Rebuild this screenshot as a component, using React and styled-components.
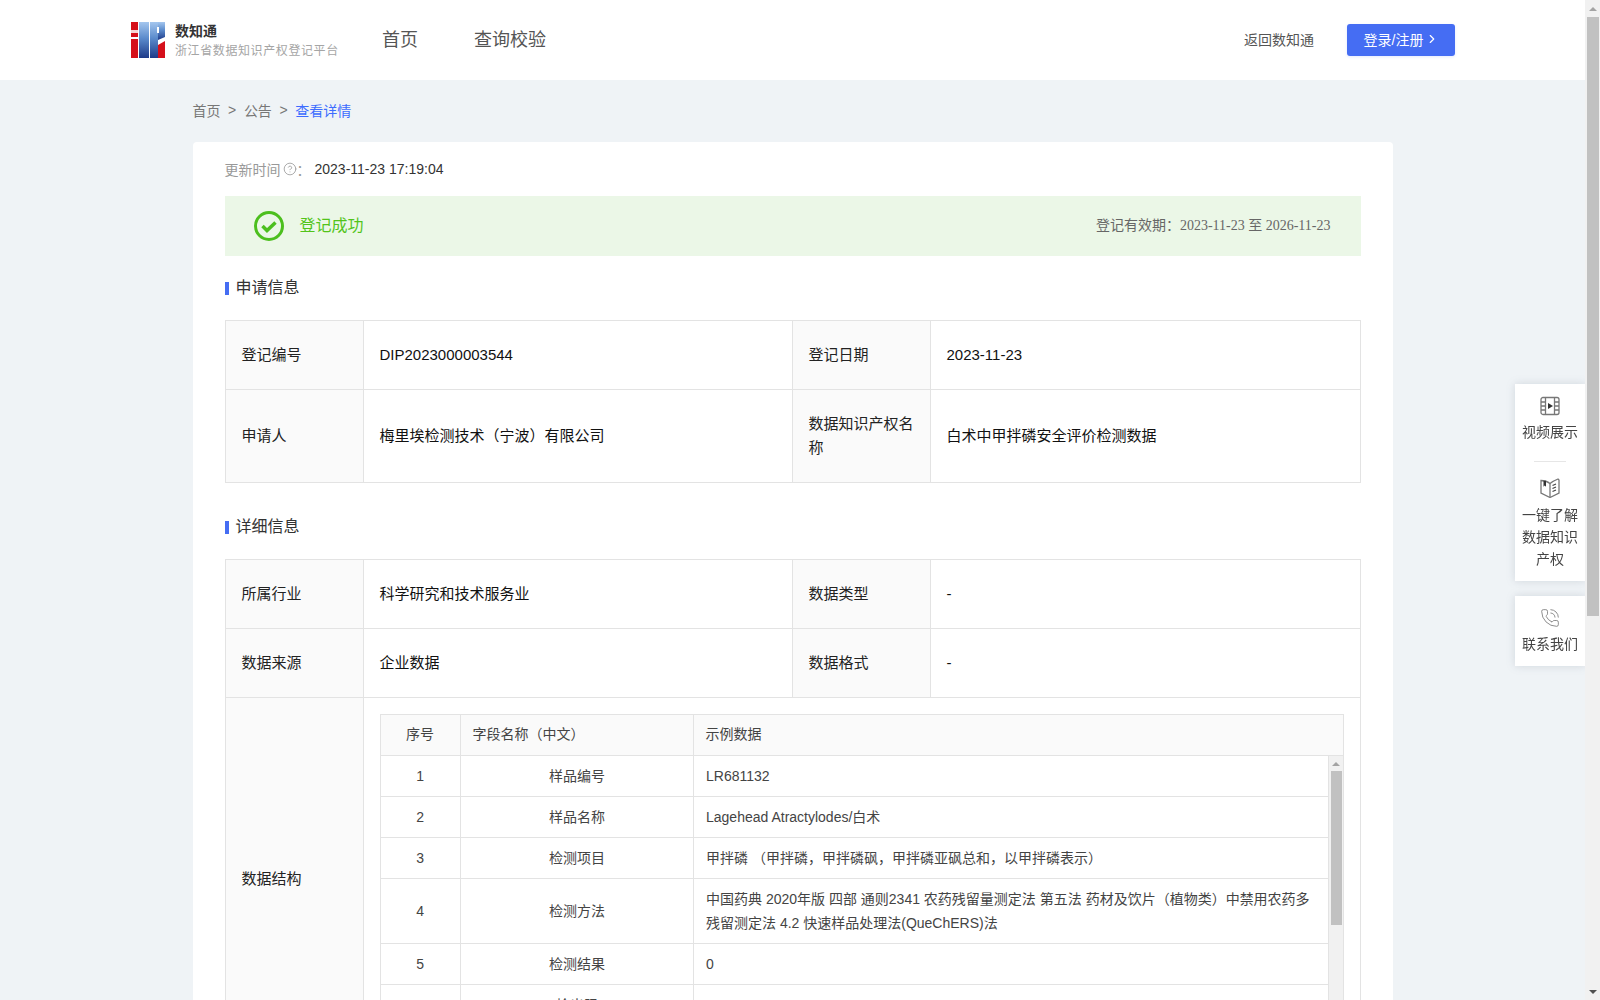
import React from 'react';
import styled, { createGlobalStyle } from 'styled-components';
import { ChevronRight, CircleHelp, PhoneCall } from 'lucide-react';

const sans = '"Liberation Sans", "Noto Sans CJK SC", sans-serif';
const line = '#e3e3e3';

const Global = createGlobalStyle`
  html { scrollbar-width: none; }
  body {
    margin: 0;
    width: 1585px;
    background: #eff3f6;
    font-family: ${sans};
    font-size: 14px;
    color: #333;
  }
`;

const Header = styled.header`
  height: 80px;
  background: #fff;
  display: flex;
  align-items: center;
  padding: 0 130px 0 131px;
`;

const Brand = styled.div`
  display: flex;
  align-items: center;
  gap: 10px;
  width: 251px;
`;

const BrandText = styled.div`
  display: flex;
  flex-direction: column;
  gap: 2px;
  padding-top: 2px;
  strong {
    font-size: 14px;
    line-height: 18px;
    color: #333;
  }
  span {
    font-size: 12px;
    line-height: 18px;
    color: #a5a5a5;
    letter-spacing: 0.6px;
    white-space: nowrap;
  }
`;

const Nav = styled.nav`
  display: flex;
  gap: 56px;
  flex: 1;
  padding-bottom: 4px;
  a {
    font-size: 18px;
    color: #555;
  }
`;

const BackLink = styled.a`
  color: #555;
  margin-right: 33px;
  padding-bottom: 3px;
`;

const LoginButton = styled.button`
  width: 108px;
  height: 32px;
  padding: 0 0 3px 1px;
  border: 0;
  border-radius: 3px;
  background: #456df3;
  color: #fff;
  font: 14px ${sans};
  display: flex;
  align-items: center;
  justify-content: center;
  gap: 2px;
  box-shadow: 0 1px 3px rgba(69, 109, 243, 0.15);
`;

const Main = styled.main`
  width: 1200px;
  margin: 0 auto 20px;
`;

const Crumbs = styled.div`
  height: 60px;
  margin-bottom: 2px;
  display: flex;
  align-items: center;
  gap: 7.6px;
  color: #777;
`;

const CrumbCurrent = styled.span`
  color: #3d6cff;
`;

const Card = styled.section`
  box-sizing: border-box;
  min-height: 1453px;
  padding: 0 32px;
  background: #fff;
  border-radius: 4px;
`;

const UpdateLine = styled.div`
  height: 54px;
  display: flex;
  align-items: center;
  color: #999;
  svg {
    margin: 0 0 0 2px;
  }
`;

const UpdateValue = styled.span`
  color: #333;
  margin-left: 4px;
`;

const Banner = styled.div`
  height: 60px;
  background: #ebf7e7;
  display: flex;
  align-items: center;
  padding: 0 30px 0 29px;
`;

const BannerTitle = styled.span`
  flex: 1;
  margin-left: 16px;
  padding-bottom: 5px;
  font-size: 16px;
  color: #52c41a;
`;

const Validity = styled.span`
  padding-bottom: 5px;
  color: #666;
`;

const Dates = styled.span`
  font-family: "Liberation Serif", "Noto Sans CJK SC", serif;
`;

const SectionTitle = styled.h3`
  height: 64px;
  margin: ${(props) => (props.$spaced ? '12px' : '0')} 0 0;
  display: flex;
  align-items: center;
  gap: 7px;
  font-size: 16px;
  font-weight: 400;
  color: #333;
  &::before {
    content: '';
    width: 4px;
    height: 13px;
    background: #456df3;
  }
  span {
    margin-top: -4px;
  }
`;

const InfoTable = styled.table`
  width: 1135px;
  table-layout: fixed;
  border-collapse: collapse;
  font-size: 15px;
  td, th {
    border: 1px solid ${line};
    padding: 0 16px;
    line-height: 24px;
    font-weight: 400;
    text-align: left;
  }
`;

const InfoRow = styled.tr`
  height: ${(props) => props.$height}px;
`;

const Label = styled.th`
  background: #fafafa;
  color: #222;
`;

const Value = styled.td`
  color: #111;
`;

const StructCell = styled.td`
  && { padding: 16px; }
`;

const FieldHead = styled.table`
  width: 100%;
  table-layout: fixed;
  border-collapse: collapse;
  font-size: 14px;
  && th {
    height: 38px;
    padding: 0 12px 2px;
    border: 1px solid ${line};
    background: #fafafa;
    color: #444;
  }
  && th:first-child { text-align: center; }
`;

const FieldBody = styled.div`
  height: 288px;
  display: flex;
  box-sizing: border-box;
  border: 1px solid ${line};
  border-top: 0;
`;

const FieldScroll = styled.div`
  flex: 1;
  min-width: 0;
  overflow-y: auto;
  scrollbar-width: none;
`;

const FieldRows = styled.table`
  width: 100%;
  table-layout: fixed;
  border-collapse: collapse;
  font-size: 14px;
  && td {
    padding: 8px 12px;
    border: 0;
    border-right: 1px solid ${line};
    border-bottom: 1px solid ${line};
    color: #444;
    line-height: 24px;
    height: 24px;
  }
  && td:nth-child(-n + 2) { text-align: center; }
`;

const Rail = styled.div`
  display: flex;
  flex-direction: column;
  flex: none;
  box-sizing: border-box;
  width: 14px;
  background: #f1f1f1;
`;

const PageRail = styled(Rail)`
  position: fixed;
  top: 0;
  right: 0;
  width: 15px;
  height: 100vh;
`;

const RailButton = styled.div`
  flex: none;
  height: ${(props) => props.$size}px;
  display: flex;
  align-items: center;
  justify-content: center;
  margin-top: ${(props) => (props.$down ? 'auto' : '0')};
  &::before {
    content: '';
    border-left: 4px solid transparent;
    border-right: 4px solid transparent;
    border-${(props) => (props.$down ? 'top' : 'bottom')}: 4px solid ${(props) => (props.$down ? '#505050' : '#a3a3a3')};
  }
`;

const RailThumb = styled.div`
  flex: none;
  height: ${(props) => props.$height}px;
  margin-left: 2px;
  margin-right: 1px;
  background: #c1c1c1;
`;

const Side = styled.aside`
  position: fixed;
  top: 384px;
  right: 15px;
  display: flex;
  flex-direction: column;
  gap: 15px;
`;

const SideCard = styled.div`
  width: 70px;
  background: #fff;
  box-shadow: 0 0 8px rgba(120, 130, 150, 0.25);
`;

const SideItem = styled.div`
  display: flex;
  flex-direction: column;
  align-items: center;
  padding: ${(props) => props.$pad};
  text-align: center;
  line-height: 22px;
  color: #444;
  svg { display: block; margin-bottom: ${(props) => props.$gap}px; color: #777; }
  span { width: 56px; }
`;

const SideRule = styled.div`
  width: 32px;
  height: 1px;
  margin: 0 auto;
  background: #e6e6e6;
`;

const ScrollBar = ({ as, thumb, button }) => {
  const Track = as || Rail;
  return (
    <Track>
      <RailButton $size={button} />
      <RailThumb $height={thumb} />
      <RailButton $size={button} $down />
    </Track>
  );
};

const LogoMark = () => (
  <svg width="34" height="36" viewBox="0 0 34 36">
    <defs>
      <linearGradient id="logoBlue" x1="0" y1="0" x2="0" y2="1">
        <stop offset="0" stopColor="#a4c6ee" />
        <stop offset="0.45" stopColor="#5b8bcc" />
        <stop offset="1" stopColor="#1e3a88" />
      </linearGradient>
    </defs>
    <rect x="0" y="0" width="7" height="8" fill="#d5101b" />
    <rect x="0" y="8" width="7" height="3" fill="#f5d5d5" />
    <rect x="0" y="11" width="7" height="4" fill="#d5101b" />
    <rect x="0" y="15" width="7" height="2" fill="#fff" />
    <rect x="0" y="17" width="7" height="19" fill="#d5101b" />
    <rect x="8" y="0" width="10" height="36" fill="url(#logoBlue)" />
    <rect x="19" y="0" width="8" height="36" fill="url(#logoBlue)" />
    <path d="M27 0h7v15l-7 3z" fill="url(#logoBlue)" />
    <rect x="26" y="5" width="2" height="6" fill="#fff" />
    <path d="M27 20.500L34 17V19L27 23z" fill="#fff" />
    <path d="M27 23l7-4v17h-7z" fill="#d5101b" />
  </svg>
);

const SuccessMark = () => (
  <svg width="30" height="30" viewBox="0 0 30 30">
    <circle cx="15" cy="15" r="13.500" fill="none" stroke="#4cbf1e" strokeWidth="3" />
    <path d="M8.500 15l4.500 4.500 8.500-8" fill="none" stroke="#4cbf1e" strokeWidth="3.500" />
  </svg>
);

const FilmIcon = () => (
  <svg width="20" height="20" viewBox="0 0 20 20" fill="none" stroke="currentColor" strokeWidth="1.3">
    <rect x="1" y="1.500" width="18" height="17" rx="2" />
    <path d="M5.500 1.500v17M14.500 1.500v17M1 6h4.500M1 10h4.500M1 14h4.500M14.500 6H19M14.500 10H19M14.500 14H19" />
    <path d="M8 7l5 3-5 3z" fill="#333" stroke="none" />
  </svg>
);

const BookIcon = () => (
  <svg width="20" height="20" viewBox="0 0 20 20" fill="none" stroke="currentColor" strokeWidth="1.3">
    <path d="M1 2.500c3 0 6.500 1 9 3 2.500-2 4-3 8-4.500l1 1v13l-9 4.500-9-4.500z" />
    <path d="M10 5.500V19" />
    <path d="M3.500 2.800h2.500v6L4.700 7.500 3.500 8.800z" fill="#333" stroke="none" />
    <path d="M12.500 7.500l3.500-1.500M12.500 10.500l3.500-1.500M12.500 13.500l3.500-1.500" stroke="#444" />
  </svg>
);

const fields = [
  ['样品编号', 'LR681132'],
  ['样品名称', 'Lagehead Atractylodes/白术'],
  ['检测项目', '甲拌磷 （甲拌磷，甲拌磷砜，甲拌磷亚砜总和，以甲拌磷表示）'],
  ['检测方法', '中国药典 2020年版 四部 通则2341 农药残留量测定法 第五法 药材及饮片（植物类）中禁用农药多残留测定法 4.2 快速样品处理法(QueChERS)法'],
  ['检测结果', '0'],
  ['检出限', '0.02'],
  ['-', '-'],
  ['-', '-'],
  ['-', '-'],
  ['-', '-'],
  ['-', '-'],
];

const InfoCols = () => (
  <colgroup>
    <col width="138" />
    <col width="429" />
    <col width="138" />
    <col width="430" />
  </colgroup>
);

const App = () => (
  <>
    <Global />
    <Header>
      <Brand>
        <LogoMark />
        <BrandText>
          <strong>数知通</strong>
          <span>浙江省数据知识产权登记平台</span>
        </BrandText>
      </Brand>
      <Nav>
        <a>首页</a>
        <a>查询校验</a>
      </Nav>
      <BackLink>返回数知通</BackLink>
      <LoginButton>
        登录/注册 <ChevronRight size={14} />
      </LoginButton>
    </Header>
    <Main>
      <Crumbs>
        <span>首页</span>
        <span>&gt;</span>
        <span>公告</span>
        <span>&gt;</span>
        <CrumbCurrent>查看详情</CrumbCurrent>
      </Crumbs>
      <Card>
        <UpdateLine>
          更新时间
          <CircleHelp size={14} strokeWidth={1.4} />：
          <UpdateValue>2023-11-23 17:19:04</UpdateValue>
        </UpdateLine>
        <Banner>
          <SuccessMark />
          <BannerTitle>登记成功</BannerTitle>
          <Validity>
            登记有效期：<Dates>2023-11-23 至 2026-11-23</Dates>
          </Validity>
        </Banner>
        <SectionTitle><span>申请信息</span></SectionTitle>
        <InfoTable>
          <InfoCols />
          <tbody>
            <InfoRow $height={69}>
              <Label>登记编号</Label>
              <Value>DIP2023000003544</Value>
              <Label>登记日期</Label>
              <Value>2023-11-23</Value>
            </InfoRow>
            <InfoRow $height={93}>
              <Label>申请人</Label>
              <Value>梅里埃检测技术（宁波）有限公司</Value>
              <Label>数据知识产权名称</Label>
              <Value>白术中甲拌磷安全评价检测数据</Value>
            </InfoRow>
          </tbody>
        </InfoTable>
        <SectionTitle $spaced><span>详细信息</span></SectionTitle>
        <InfoTable>
          <InfoCols />
          <tbody>
            <InfoRow $height={69}>
              <Label>所属行业</Label>
              <Value>科学研究和技术服务业</Value>
              <Label>数据类型</Label>
              <Value>-</Value>
            </InfoRow>
            <InfoRow $height={69}>
              <Label>数据来源</Label>
              <Value>企业数据</Value>
              <Label>数据格式</Label>
              <Value>-</Value>
            </InfoRow>
            <tr>
              <Label>数据结构</Label>
              <StructCell colSpan={3}>
                <FieldHead>
                  <colgroup>
                    <col width="80" />
                    <col width="233" />
                    <col />
                  </colgroup>
                  <thead>
                    <tr>
                      <th>序号</th>
                      <th>字段名称（中文）</th>
                      <th>示例数据</th>
                    </tr>
                  </thead>
                </FieldHead>
                <FieldBody>
                  <FieldScroll>
                    <FieldRows>
                      <colgroup>
                        <col width="80" />
                        <col width="233" />
                        <col />
                      </colgroup>
                      <tbody>
                        {fields.map(([name, sample], i) => (
                          <tr key={i}>
                            <td>{i + 1}</td>
                            <td>{name}</td>
                            <td>{sample}</td>
                          </tr>
                        ))}
                      </tbody>
                    </FieldRows>
                  </FieldScroll>
                  <ScrollBar thumb={154} button={15} />
                </FieldBody>
              </StructCell>
            </tr>
          </tbody>
        </InfoTable>
      </Card>
    </Main>
    <Side>
      <SideCard>
        <SideItem $pad="12px 0 18px" $gap={5}>
          <FilmIcon />
          <span>视频展示</span>
        </SideItem>
        <SideRule />
        <SideItem $pad="16px 0 11px" $gap={6}>
          <BookIcon />
          <span>一键了解数据知识产权</span>
        </SideItem>
      </SideCard>
      <SideCard>
        <SideItem $pad="12px 0 11px" $gap={5}>
          <PhoneCall size={20} strokeWidth={1} />
          <span>联系我们</span>
        </SideItem>
      </SideCard>
    </Side>
    <ScrollBar as={PageRail} thumb={599} button={17} />
  </>
);

export default App;
